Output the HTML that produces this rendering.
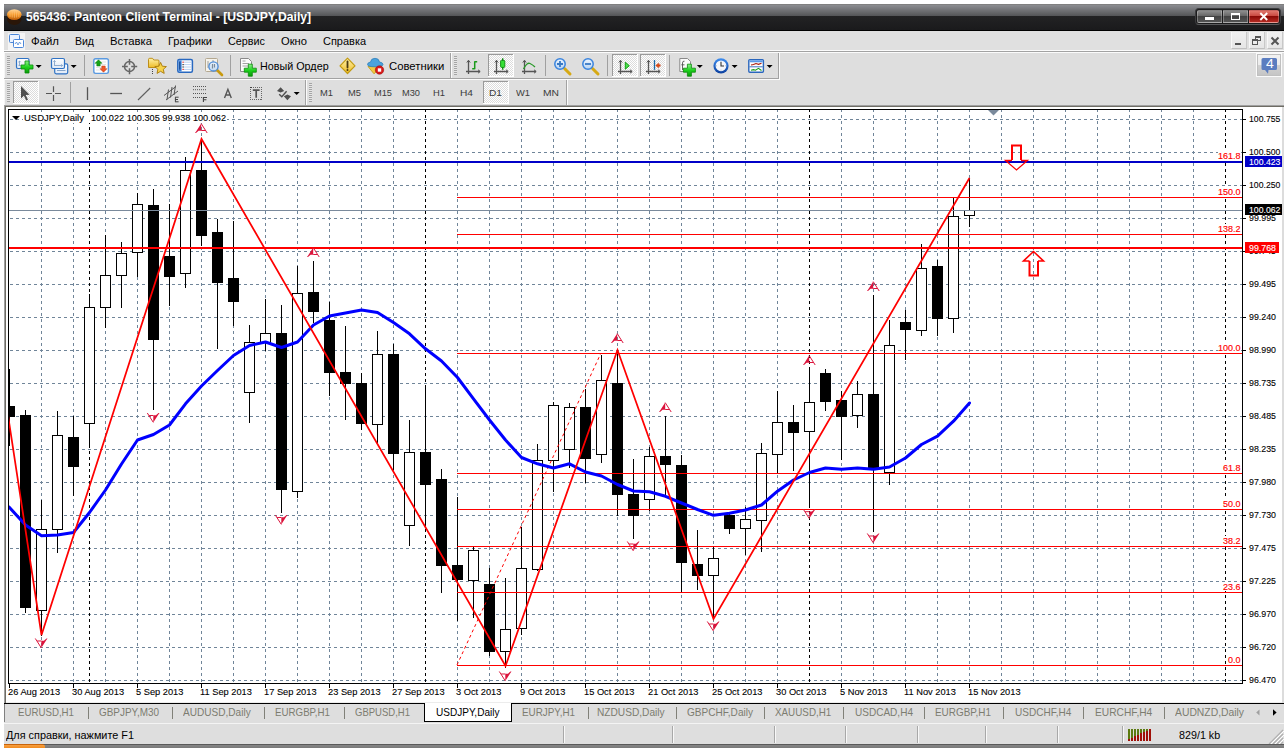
<!DOCTYPE html>
<html><head><meta charset="utf-8"><title>565436: Panteon Client Terminal - [USDJPY,Daily]</title>
<style>html,body{margin:0;padding:0}body{width:1288px;height:748px;background:#fff;position:relative;overflow:hidden;font-family:"Liberation Sans",sans-serif}.abs{position:absolute}.t{position:absolute;white-space:nowrap;transform-origin:0 50%;font-family:"Liberation Sans",sans-serif}</style></head><body>
<div class="abs" style="left:4px;top:4px;width:1280px;height:27px;background:linear-gradient(#808080 0,#808080 1px,#8c8d91 1px,#545557 12px,#232324 12px,#1a1a1c 26px,#000 26px,#000 27px)"></div>
<span class="t" style="left:26.0px;top:8.7px;font-size:12px;line-height:16px;color:#fff;font-weight:bold;transform:scaleX(1.014);">565436: Panteon Client Terminal - [USDJPY,Daily]</span>
<svg class="abs" style="left:6px;top:8px" width="18" height="18" viewBox="0 0 18 18"><defs><linearGradient id="og" x1="0" y1="0" x2="0" y2="1"><stop offset="0" stop-color="#ffd9a0"/><stop offset="0.5" stop-color="#f79a2c"/><stop offset="1" stop-color="#b85a08"/></linearGradient></defs><ellipse cx="8.3" cy="11.3" rx="7.3" ry="5.6" fill="#2a1608"/><ellipse cx="8.3" cy="6.6" rx="7.3" ry="5.4" fill="url(#og)"/><path d="M4 4.5V9M6.2 3.5V9.5M8.4 3.2V9.8M10.6 3.5V9.5M12.8 4.5V9" stroke="#ffc880" stroke-width="0.8" opacity="0.7"/></svg>
<div class="abs" style="left:1195px;top:8px;width:86px;height:17px;border-radius:4px;background:#1b1b1c;border:1px solid #3c3c3e;border-bottom-color:#5a5a5c;box-sizing:border-box"></div>
<div class="abs" style="left:1197px;top:10px;width:25px;height:13px;box-sizing:border-box;border:1px solid rgba(255,255,255,0.28);border-radius:2px 0 0 2px;background:linear-gradient(#8c8c8c,#626262 50%,#424242 50%,#545454)"></div>
<div class="abs" style="left:1223px;top:10px;width:25px;height:13px;box-sizing:border-box;border:1px solid rgba(255,255,255,0.28);background:linear-gradient(#8c8c8c,#626262 50%,#424242 50%,#545454)"></div>
<div class="abs" style="left:1249px;top:10px;width:30px;height:13px;box-sizing:border-box;border:1px solid rgba(255,255,255,0.28);border-radius:0 2px 2px 0;background:linear-gradient(#e0766c,#c6443c 50%,#8a0a06 50%,#b42a22)"></div>
<div class="abs" style="left:1205px;top:17px;width:9px;height:3px;background:#fff"></div>
<div class="abs" style="left:1231px;top:13px;width:9px;height:7px;border:1px solid #fff;border-top-width:2px;box-sizing:border-box"></div>
<svg class="abs" style="left:1259px;top:12px" width="10" height="9"><path d="M1.3 1L8.2 8M8.2 1L1.3 8" stroke="#fff" stroke-width="1.9"/></svg>
<div class="abs" style="left:4px;top:31px;width:1280px;height:19px;background:#e0e0e0"></div>
<div class="abs" style="left:4px;top:50px;width:1280px;height:1px;background:#fbfbfb"></div>
<div class="abs" style="left:4px;top:51px;width:1280px;height:1px;background:#a2a2a2"></div>
<div class="abs" style="left:4px;top:52px;width:1280px;height:1px;background:#fbfbfb"></div>
<span class="t" style="left:31.0px;top:33.5px;font-size:11px;line-height:15px;color:#000;transform:scaleX(1.035);">Файл</span>
<span class="t" style="left:75.0px;top:33.5px;font-size:11px;line-height:15px;color:#000;transform:scaleX(0.955);">Вид</span>
<span class="t" style="left:110.0px;top:33.5px;font-size:11px;line-height:15px;color:#000;transform:scaleX(1.027);">Вставка</span>
<span class="t" style="left:168.0px;top:33.5px;font-size:11px;line-height:15px;color:#000;transform:scaleX(1.006);">Графики</span>
<span class="t" style="left:228.0px;top:33.5px;font-size:11px;line-height:15px;color:#000;transform:scaleX(0.982);">Сервис</span>
<span class="t" style="left:281.0px;top:33.5px;font-size:11px;line-height:15px;color:#000;transform:scaleX(1.017);">Окно</span>
<span class="t" style="left:323.0px;top:33.5px;font-size:11px;line-height:15px;color:#000;transform:scaleX(0.997);">Справка</span>
<svg class="abs" style="left:8px;top:33px" width="17" height="17" viewBox="0 0 17 17"><rect x="0" y="0" width="17" height="17" fill="#f4f4f4"/><rect x="1.5" y="1.5" width="10" height="8" rx="1" fill="#eaf2ff" stroke="#4a86d8"/><rect x="5.5" y="6.5" width="10" height="8" rx="1" fill="#fff" stroke="#4a86d8"/><path d="M7 11l1.5 -2l1.5 3l1.5 -3l1.5 2" stroke="#4a86d8" fill="none" stroke-width="0.8"/></svg>
<div class="abs" style="left:1231px;top:32px;width:16px;height:17px;background:linear-gradient(#f0f0f0,#e6e6e6);border-right:1px solid #c8c8c8;border-bottom:1px solid #c0c0c0;border-left:1px solid #f8f8f8;box-sizing:border-box"></div>
<div class="abs" style="left:1249px;top:32px;width:16px;height:17px;background:linear-gradient(#f0f0f0,#e6e6e6);border-right:1px solid #c8c8c8;border-bottom:1px solid #c0c0c0;border-left:1px solid #f8f8f8;box-sizing:border-box"></div>
<div class="abs" style="left:1267px;top:32px;width:16px;height:17px;background:linear-gradient(#f0f0f0,#e6e6e6);border-right:1px solid #c8c8c8;border-bottom:1px solid #c0c0c0;border-left:1px solid #f8f8f8;box-sizing:border-box"></div>
<div class="abs" style="left:1235px;top:43px;width:6px;height:2px;background:#555"></div>
<div class="abs" style="left:1255px;top:36px;width:6px;height:5px;border:1px solid #555;border-top-width:2px;box-sizing:border-box"></div>
<div class="abs" style="left:1252px;top:39px;width:6px;height:6px;border:1px solid #555;border-top-width:2px;box-sizing:border-box;background:#ececec"></div>
<svg class="abs" style="left:1270px;top:36px" width="10" height="10"><path d="M1.5 1.5L8.5 8.5M8.5 1.5L1.5 8.5" stroke="#555" stroke-width="2"/></svg>
<div class="abs" style="left:4px;top:53px;width:1280px;height:52px;background:#dedede"></div>
<div class="abs" style="left:4px;top:53px;width:1px;height:52px;background:#f6f6f6"></div>
<div class="abs" style="left:4px;top:78px;width:776px;height:1px;background:#a2a2a2"></div>
<div class="abs" style="left:4px;top:79px;width:776px;height:1px;background:#fbfbfb"></div>
<div class="abs" style="left:450px;top:53px;width:1px;height:25px;background:#a2a2a2"></div>
<div class="abs" style="left:451px;top:53px;width:1px;height:25px;background:#fbfbfb"></div>
<div class="abs" style="left:778px;top:53px;width:1px;height:26px;background:#a2a2a2"></div>
<div class="abs" style="left:779px;top:53px;width:1px;height:27px;background:#fbfbfb"></div>
<div class="abs" style="left:305px;top:80px;width:1px;height:25px;background:#a2a2a2"></div>
<div class="abs" style="left:306px;top:80px;width:1px;height:25px;background:#fbfbfb"></div>
<div class="abs" style="left:566px;top:80px;width:1px;height:25px;background:#a2a2a2"></div>
<div class="abs" style="left:567px;top:80px;width:1px;height:25px;background:#fbfbfb"></div>
<div class="abs" style="left:7px;top:56px;width:3px;height:19px;background:repeating-linear-gradient(#a4a4a4 0,#a4a4a4 1px,#e6e6e6 1px,#e6e6e6 2px)"></div>
<div class="abs" style="left:454px;top:56px;width:3px;height:19px;background:repeating-linear-gradient(#a4a4a4 0,#a4a4a4 1px,#e6e6e6 1px,#e6e6e6 2px)"></div>
<div class="abs" style="left:7px;top:83px;width:3px;height:19px;background:repeating-linear-gradient(#a4a4a4 0,#a4a4a4 1px,#e6e6e6 1px,#e6e6e6 2px)"></div>
<div class="abs" style="left:309px;top:83px;width:3px;height:19px;background:repeating-linear-gradient(#a4a4a4 0,#a4a4a4 1px,#e6e6e6 1px,#e6e6e6 2px)"></div>
<div class="abs" style="left:84px;top:55px;width:1px;height:21px;background:#a0a0a0"></div>
<div class="abs" style="left:230px;top:55px;width:1px;height:21px;background:#a0a0a0"></div>
<div class="abs" style="left:545px;top:55px;width:1px;height:21px;background:#a0a0a0"></div>
<div class="abs" style="left:607px;top:55px;width:1px;height:21px;background:#a0a0a0"></div>
<div class="abs" style="left:669px;top:55px;width:1px;height:21px;background:#a0a0a0"></div>
<div class="abs" style="left:70px;top:82px;width:1px;height:21px;background:#a0a0a0"></div>
<svg class="abs" style="left:0;top:0" width="1288" height="108" viewBox="0 0 1288 108">
<defs>
<linearGradient id="gPlus" x1="0" y1="0" x2="0" y2="1"><stop offset="0" stop-color="#8cf28c"/><stop offset="0.5" stop-color="#1fd21f"/><stop offset="1" stop-color="#0a9a0a"/></linearGradient>
<linearGradient id="gWin" x1="0" y1="0" x2="0" y2="1"><stop offset="0" stop-color="#ffffff"/><stop offset="1" stop-color="#dfe9f6"/></linearGradient>
<linearGradient id="gYel" x1="0" y1="0" x2="0" y2="1"><stop offset="0" stop-color="#fff2a8"/><stop offset="1" stop-color="#eebc28"/></linearGradient>
<linearGradient id="gLens" x1="0" y1="0" x2="0" y2="1"><stop offset="0" stop-color="#eef6ff"/><stop offset="1" stop-color="#b8d4f2"/></linearGradient>
<linearGradient id="gClock" x1="0" y1="0" x2="0" y2="1"><stop offset="0" stop-color="#3f8ef0"/><stop offset="1" stop-color="#0b3f9e"/></linearGradient>
<pattern id="chk" width="2" height="2" patternUnits="userSpaceOnUse"><rect width="2" height="2" fill="#ffffff"/><rect width="1" height="1" fill="#dcdcdc"/><rect x="1" y="1" width="1" height="1" fill="#dcdcdc"/></pattern>
<g id="plus"><path d="M4 0H8V4H12V8H8V12H4V8H0V4H4Z" fill="url(#gPlus)" stroke="#078a07" stroke-width="0.8"/></g>
<g id="dd"><path d="M0 0H6L3 3Z" fill="#000"/></g>
<g id="axes" fill="none" stroke="#555" stroke-width="1.3"><path d="M2.5 0.5V14M0 11.5H14"/><path d="M0.8 2.5L2.5 0.3L4.2 2.5M12 9.8L14.2 11.5L12 13.2" stroke-width="1"/></g>
</defs>

<!-- pressed buttons (checker) -->
<g shape-rendering="crispEdges">
<rect x="13" y="81" width="26" height="23" fill="url(#chk)"/><path d="M13.5 103V81.5H38" stroke="#9a9a9a" fill="none"/><path d="M13 103.5H38.5V81" stroke="#fff" fill="none"/>
<rect x="483" y="81" width="26" height="23" fill="url(#chk)"/><path d="M483.5 103V81.5H508" stroke="#9a9a9a" fill="none"/><path d="M483 103.5H508.5V81" stroke="#fff" fill="none"/>
<rect x="488" y="54" width="26" height="23" fill="url(#chk)"/><path d="M488.5 76V54.5H513" stroke="#9a9a9a" fill="none"/><path d="M488 76.5H513.5V54" stroke="#fff" fill="none"/>
<rect x="612" y="54" width="26" height="23" fill="url(#chk)"/><path d="M612.5 76V54.5H637" stroke="#9a9a9a" fill="none"/><path d="M612 76.5H637.5V54" stroke="#fff" fill="none"/>
<rect x="640" y="54" width="26" height="23" fill="url(#chk)"/><path d="M640.5 76V54.5H665" stroke="#9a9a9a" fill="none"/><path d="M640 76.5H665.5V54" stroke="#fff" fill="none"/>
</g>

<!-- new chart -->
<rect x="16.5" y="58.5" width="12.5" height="10" rx="1.5" fill="url(#gWin)" stroke="#2f72c4" stroke-width="1.2"/>
<path d="M19.5 61V66M18.3 62.2L19.5 61L20.7 62.2M18.3 64.8L19.5 66L20.7 64.8" stroke="#7a9cc4" fill="none" stroke-width="0.8"/>
<use href="#plus" x="21" y="61"/>
<use href="#dd" x="35.7" y="65"/>
<!-- profiles -->
<rect x="54.7" y="63.8" width="13" height="10" rx="1.5" fill="url(#gWin)" stroke="#2f72c4" stroke-width="1.2"/>
<path d="M57 70.5H65.5" stroke="#7a9cc4" stroke-width="0.9"/>
<rect x="51.5" y="58.5" width="13" height="10" rx="1.5" fill="url(#gWin)" stroke="#2f72c4" stroke-width="1.2"/>
<path d="M54.5 60.5V65M53.3 61.7L54.5 60.5L55.7 61.7M54 65.5H62.5M61.3 64.3L62.5 65.5L61.3 66.7" stroke="#7a9cc4" fill="none" stroke-width="0.8"/>
<use href="#dd" x="70.7" y="65"/>
<!-- market watch -->
<rect x="93.8" y="58.8" width="14.6" height="14.6" rx="1.8" fill="#fdfdfd" stroke="#5b9ae0" stroke-width="1.4"/>
<path d="M96 67.5H106M96 70H106M101 62H106M101 64.5H106" stroke="#d8d8d8" stroke-width="0.7"/>
<path d="M98.5 59.8L102 63.3H100.2V66H96.8V63.3H95Z" fill="#17a317" stroke="#0c7a0c" stroke-width="0.5"/>
<path d="M103.5 72.2L100 68.7H101.8V66H105.2V68.7H107Z" fill="#f0582a" stroke="#c03a10" stroke-width="0.5"/>
<!-- crosshair circle -->
<g fill="none" stroke="#666" stroke-width="1.5"><circle cx="129.5" cy="66.5" r="5"/><path d="M129.5 59V64.8M129.5 68.2V74.2M122 66.5H127.8M131.2 66.5H137.2"/></g>
<!-- folder + star -->
<path d="M148.5 59.5Q148.5 58.3 149.7 58.3H152.5L153.8 60H158Q159 60 159 61V67.5H148.5Z" fill="url(#gYel)" stroke="#b8860b" stroke-width="0.9"/>
<path d="M152.5 69V70M152.5 71V72M152.5 73V74" stroke="#444" stroke-width="1"/>
<path d="M160.6 62.4L162.3 66.2L166.4 66.6L163.3 69.3L164.2 73.4L160.6 71.3L157 73.4L157.9 69.3L154.8 66.6L158.9 66.2Z" fill="#f7d34a" stroke="#a8780a" stroke-width="0.9" stroke-linejoin="round"/>
<!-- navigator -->
<rect x="177.8" y="59.6" width="14.6" height="12.6" rx="1.5" fill="#fff" stroke="#2868c0" stroke-width="1.5"/>
<rect x="178.6" y="60.4" width="3" height="11" fill="#3b7fd8"/>
<path d="M179.8 62V69.5" stroke="#123a78" stroke-width="0.9"/>
<path d="M184 62.2H191.5M184 64.6H191.5M184 67H191.5M184 69.4H191.5" stroke="#a8c4ee" stroke-width="0.8"/>
<rect x="182.5" y="61.6" width="1.2" height="1.2" fill="#e01010"/><rect x="182.5" y="64" width="1.2" height="1.2" fill="#222"/><rect x="182.5" y="66.4" width="1.2" height="1.2" fill="#222"/><rect x="182.5" y="68.8" width="1.2" height="1.2" fill="#e01010"/>
<!-- strategy tester -->
<rect x="205.5" y="58.5" width="12" height="13" rx="1" fill="#f6f3ec" stroke="#b4a890" stroke-width="1"/>
<path d="M208 61V68M210 63V66M213 60V66" stroke="#888" stroke-width="0.8"/>
<path d="M217 70L222 75" stroke="#c89a10" stroke-width="2.6" stroke-linecap="round"/>
<circle cx="213.5" cy="66.4" r="4.6" fill="url(#gLens)" fill-opacity="0.85" stroke="#4a8ad8" stroke-width="1.3"/>
<path d="M212.5 64V68.5M214.5 64V67.5" stroke="#7a8a9a" stroke-width="1.2"/>
<!-- new order -->
<path d="M240.5 58.5H248.5L251.5 61.5V71.5H240.5Z" fill="#fbfbfb" stroke="#8a8a8a" stroke-width="1"/>
<path d="M242.5 61H245.5M242.5 63.5H249M242.5 66H249" stroke="#9a9a9a" stroke-width="0.9"/>
<use href="#plus" x="244.3" y="64.2" transform="translate(0 0)"/>
<!-- diamond warning -->
<path d="M347.5 58.2L355 65.8L347.5 73.5L340 65.8Z" fill="url(#gYel)" stroke="#c29a12" stroke-width="1.2" stroke-linejoin="round"/>
<path d="M347.5 61.5V67.5" stroke="#4a3a10" stroke-width="1.8" stroke-linecap="round"/><circle cx="347.5" cy="70" r="1" fill="#4a3a10"/>
<!-- advisors -->
<path d="M368 66.5L374 73.8L381.5 66.5Z" fill="#f2c842" stroke="#c29a12" stroke-width="0.8"/>
<path d="M367.5 64.5Q367.5 62.5 370.5 62Q371 58.3 375 58.3Q379 58.3 379.5 62Q383 62.5 383 64.5Q383 66.8 375.2 66.8Q367.5 66.8 367.5 64.5Z" fill="#4aa2dc" stroke="#2a7ab8" stroke-width="0.7"/>
<circle cx="379.5" cy="70" r="4.2" fill="#d81818" stroke="#a00c0c" stroke-width="0.6"/><rect x="377.8" y="68.3" width="3.4" height="3.4" fill="#fff"/>
<!-- bars chart icon -->
<use href="#axes" x="466" y="60"/>
<path d="M474.7 61.3V69.3M474.7 61.8H477.2M472.2 68.8H474.7" stroke="#1a9a1a" stroke-width="1.5" fill="none"/>
<!-- candle icon -->
<use href="#axes" x="494" y="60"/>
<path d="M502.7 58.2V69.8" stroke="#0f8a0f" stroke-width="1.4"/><rect x="500.6" y="60.4" width="4.2" height="7" rx="0.8" fill="#35e035" stroke="#0f8a0f" stroke-width="0.9"/>
<!-- line icon -->
<use href="#axes" x="522" y="60"/>
<path d="M523.5 69Q527 62 530 63.5T535 67" stroke="#2a9a2a" stroke-width="1.3" fill="none"/>
<!-- zoom in -->
<path d="M564.5 68.5L570 74" stroke="#d6a914" stroke-width="3" stroke-linecap="round"/>
<circle cx="560" cy="64" r="5.2" fill="url(#gLens)" stroke="#3a84de" stroke-width="1.5"/>
<path d="M557 64H563M560 61V67" stroke="#3a7ac4" stroke-width="1.8"/>
<!-- zoom out -->
<path d="M592.5 68.5L598 74" stroke="#d6a914" stroke-width="3" stroke-linecap="round"/>
<circle cx="588" cy="64" r="5.2" fill="url(#gLens)" stroke="#3a84de" stroke-width="1.5"/>
<path d="M585 64H591" stroke="#3a7ac4" stroke-width="1.8"/>
<!-- autoscroll -->
<use href="#axes" x="618" y="60"/>
<path d="M625.3 62.2L629.3 65.7L625.3 69.2Z" fill="#4be04b" stroke="#12a012" stroke-width="1"/>
<!-- chart shift -->
<use href="#axes" x="646" y="60"/>
<path d="M654.5 60V69.8" stroke="#1a6aa8" stroke-width="1.3"/>
<path d="M655.8 65.5L658.6 63.2V64.7H660.2V66.3H658.6V67.8Z" fill="#e04a10" stroke="#c03000" stroke-width="0.5"/>
<!-- indicators add -->
<path d="M679.8 58.5H687.5L690.5 61.5V71.5H679.8Z" fill="#fbfbfb" stroke="#8a8a8a" stroke-width="1"/>
<path d="M684.5 61.2Q682.5 60.8 682.5 63V70M681.3 64.8H684.5" stroke="#555" stroke-width="0.9" fill="none"/>
<use href="#plus" x="683.4" y="64.2"/>
<use href="#dd" x="696.8" y="65"/>
<!-- clock -->
<circle cx="721" cy="65.8" r="7.6" fill="url(#gClock)"/>
<circle cx="721" cy="65.8" r="5.4" fill="#f4f6fa"/>
<path d="M721 62V66H724" stroke="#333" stroke-width="1.1" fill="none"/>
<path d="M721 61.2V61.8M721 69.8V70.4M716.4 65.8H717M725 65.8H725.6" stroke="#6a8ab8" stroke-width="0.8"/>
<use href="#dd" x="731.6" y="65"/>
<!-- templates -->
<rect x="748.8" y="59.6" width="14.6" height="12.6" rx="1" fill="#fff" stroke="#2a66bc" stroke-width="1.4"/>
<rect x="749.5" y="60.3" width="13.2" height="2" fill="#5b9ae8"/>
<path d="M749.5 66.8H762.7" stroke="#2a66bc" stroke-width="0.9"/>
<path d="M751 65L753.5 64.5L756 63.5L758.5 64.3L761.5 63.2" stroke="#a81808" stroke-width="1.1" fill="none"/>
<path d="M751 70.3L753.5 69.6L755.5 70.2L758.5 68.4L761.5 70.5" stroke="#189a18" stroke-width="1.1" fill="none"/>
<use href="#dd" x="766.6" y="65"/>

<!-- toolbar 2 icons -->
<path d="M21 86V98.4L23.9 95.7L26.2 100.6L28 99.8L25.7 95L29.6 94.7Z" fill="#505050"/>
<g stroke="#555" stroke-width="1.2" fill="none"><path d="M53.5 86.3V92M53.5 95V101M46 93.5H52M55 93.5H61"/></g>
<path d="M87.5 87.2V100" stroke="#555" stroke-width="1.3"/>
<path d="M110.2 93.5H122" stroke="#555" stroke-width="1.3"/>
<path d="M138 100L150.2 88" stroke="#606060" stroke-width="1.1"/>
<!-- channel E -->
<g stroke="#555" stroke-width="1" fill="none"><path d="M164 95.5L176 86.5M166 100L178 91M168.5 89.5L167 99.5M172 87L170.5 97.5M175.5 85.5L174 95"/></g>
<path d="M175 97.2H178.6M175 99.5H178M175 101.8H178.6M175.4 97.2V101.8" stroke="#444" stroke-width="1" fill="none"/>
<!-- fibo F -->
<g stroke="#555" stroke-width="1" stroke-dasharray="1 1"><path d="M193 86.5H206M193 89.7H206M193 93.5H206M193 97.5H202"/></g>
<path d="M203.4 102V97.5H207M203.4 99.8H206.4" stroke="#444" stroke-width="1.1" fill="none"/>
<!-- A -->
<path d="M224.5 98L227.9 89.3L231.3 98M225.8 95H230" stroke="#555" stroke-width="1.4" fill="none"/>
<!-- T box -->
<g shape-rendering="crispEdges"><rect x="250.5" y="87.5" width="11" height="12" fill="none" stroke="#666" stroke-width="1" stroke-dasharray="1 1"/></g>
<rect x="250" y="87" width="2" height="1" fill="#444"/>
<path d="M252.8 90.2H259.6M256.2 90V97.8" stroke="#555" stroke-width="1.7" fill="none"/>
<!-- arrows -->
<path d="M277 91L280.6 87.2L284.2 91L280.6 92.6Z M283.8 96.2L287.4 94.6L291 96.2L287.4 100.2Z" fill="#505050"/>
<path d="M279.2 94.2L281.8 96.8L286.6 91.2" stroke="#505050" stroke-width="1.4" fill="none"/>
<use href="#dd" x="293.7" y="92"/>
</svg>

<span class="t" style="left:260.4px;top:59.0px;font-size:11px;line-height:15px;color:#000;transform:scaleX(0.979);">Новый Ордер</span>
<span class="t" style="left:389.3px;top:59.0px;font-size:11px;line-height:15px;color:#000;transform:scaleX(1.027);">Советники</span>
<span class="t" style="left:320.0px;top:87.3px;font-size:9px;line-height:13px;color:#3c3c3c;transform:scaleX(1.040);-webkit-text-stroke:0.1px #3c3c3c;-webkit-text-stroke:0;">M1</span>
<span class="t" style="left:348.0px;top:87.3px;font-size:9px;line-height:13px;color:#3c3c3c;transform:scaleX(1.040);-webkit-text-stroke:0.1px #3c3c3c;-webkit-text-stroke:0;">M5</span>
<span class="t" style="left:374.0px;top:87.3px;font-size:9px;line-height:13px;color:#3c3c3c;transform:scaleX(1.028);-webkit-text-stroke:0.1px #3c3c3c;-webkit-text-stroke:0;">M15</span>
<span class="t" style="left:402.0px;top:87.3px;font-size:9px;line-height:13px;color:#3c3c3c;transform:scaleX(1.028);-webkit-text-stroke:0.1px #3c3c3c;-webkit-text-stroke:0;">M30</span>
<span class="t" style="left:433.0px;top:87.3px;font-size:9px;line-height:13px;color:#3c3c3c;transform:scaleX(1.043);-webkit-text-stroke:0.1px #3c3c3c;-webkit-text-stroke:0;">H1</span>
<span class="t" style="left:460.0px;top:87.3px;font-size:9px;line-height:13px;color:#3c3c3c;transform:scaleX(1.130);-webkit-text-stroke:0.1px #3c3c3c;-webkit-text-stroke:0;">H4</span>
<span class="t" style="left:489.0px;top:87.3px;font-size:9px;line-height:13px;color:#3c3c3c;transform:scaleX(1.130);-webkit-text-stroke:0.1px #3c3c3c;-webkit-text-stroke:0;">D1</span>
<span class="t" style="left:516.0px;top:87.3px;font-size:9px;line-height:13px;color:#3c3c3c;transform:scaleX(1.037);-webkit-text-stroke:0.1px #3c3c3c;-webkit-text-stroke:0;">W1</span>
<span class="t" style="left:543.0px;top:87.3px;font-size:9px;line-height:13px;color:#3c3c3c;transform:scaleX(1.143);-webkit-text-stroke:0.1px #3c3c3c;-webkit-text-stroke:0;">MN</span>
<div class="abs" style="left:1256px;top:53px;width:26px;height:24px;background:linear-gradient(#f2f2f2 0,#ececec 48%,#d2d2d2 48%,#c4c4c4 100%);border:1px solid #fafafa;box-shadow:inset 0 0 0 1px #c0c0c0;box-sizing:border-box"></div>
<svg class="abs" style="left:1261px;top:58px" width="17" height="17"><path d="M2 0H14.5a1.5 1.5 0 0 1 1.5 1.5V10.5a1.5 1.5 0 0 1 -1.5 1.5H7.5L7 15.8L4 12H2a1.5 1.5 0 0 1 -1.5 -1.5V1.5a1.5 1.5 0 0 1 1.5 -1.5Z" fill="#5b7dc0"/></svg>
<span class="t" style="left:1265.6px;top:56.3px;font-size:12px;line-height:16px;color:#fff;transform:scaleX(1.169);">4</span>
<div class="abs" style="left:4px;top:105px;width:1280px;height:1px;background:#a0a0a0"></div>
<div class="abs" style="left:5px;top:106px;width:1279px;height:1px;background:#6e6c64"></div>
<div class="abs" style="left:4px;top:105px;width:1px;height:598px;background:#a0a0a0"></div>
<div class="abs" style="left:5px;top:106px;width:1px;height:597px;background:#6e6c64"></div>
<div class="abs" style="left:1282px;top:107px;width:2px;height:596px;background:#dcdcdc"></div>
<div class="abs" style="left:4px;top:703px;width:1280px;height:20px;background:#dedede"></div>
<div class="abs" style="left:6px;top:702px;width:1276px;height:1px;background:#ececec"></div>
<div class="abs" style="left:4px;top:703px;width:1280px;height:1px;background:#000"></div>
<div class="abs" style="left:4px;top:704px;width:1px;height:18px;background:#808080"></div>
<span class="t" style="left:18.0px;top:705.0px;font-size:11px;line-height:15px;color:#7c7c70;transform:scaleX(0.881);">EURUSD,H1</span>
<span class="t" style="left:99.0px;top:705.0px;font-size:11px;line-height:15px;color:#7c7c70;transform:scaleX(0.903);">GBPJPY,M30</span>
<span class="t" style="left:183.0px;top:705.0px;font-size:11px;line-height:15px;color:#7c7c70;transform:scaleX(0.915);">AUDUSD,Daily</span>
<span class="t" style="left:275.0px;top:705.0px;font-size:11px;line-height:15px;color:#7c7c70;transform:scaleX(0.885);">EURGBP,H1</span>
<span class="t" style="left:355.0px;top:705.0px;font-size:11px;line-height:15px;color:#7c7c70;transform:scaleX(0.865);">GBPUSD,H1</span>
<span class="t" style="left:522.0px;top:705.0px;font-size:11px;line-height:15px;color:#7c7c70;transform:scaleX(0.897);">EURJPY,H1</span>
<span class="t" style="left:597.0px;top:705.0px;font-size:11px;line-height:15px;color:#7c7c70;transform:scaleX(0.923);">NZDUSD,Daily</span>
<span class="t" style="left:686.7px;top:705.0px;font-size:11px;line-height:15px;color:#7c7c70;transform:scaleX(0.915);">GBPCHF,Daily</span>
<span class="t" style="left:774.7px;top:705.0px;font-size:11px;line-height:15px;color:#7c7c70;transform:scaleX(0.894);">XAUUSD,H1</span>
<span class="t" style="left:854.7px;top:705.0px;font-size:11px;line-height:15px;color:#7c7c70;transform:scaleX(0.912);">USDCAD,H4</span>
<span class="t" style="left:935.0px;top:705.0px;font-size:11px;line-height:15px;color:#7c7c70;transform:scaleX(0.901);">EURGBP,H1</span>
<span class="t" style="left:1014.7px;top:705.0px;font-size:11px;line-height:15px;color:#7c7c70;transform:scaleX(0.912);">USDCHF,H4</span>
<span class="t" style="left:1094.7px;top:705.0px;font-size:11px;line-height:15px;color:#7c7c70;transform:scaleX(0.928);">EURCHF,H4</span>
<span class="t" style="left:1175.0px;top:705.0px;font-size:11px;line-height:15px;color:#7c7c70;transform:scaleX(0.941);">AUDNZD,Daily</span>
<div class="abs" style="left:88px;top:707px;width:1px;height:12px;background:#808078"></div>
<div class="abs" style="left:172px;top:707px;width:1px;height:12px;background:#808078"></div>
<div class="abs" style="left:264px;top:707px;width:1px;height:12px;background:#808078"></div>
<div class="abs" style="left:344px;top:707px;width:1px;height:12px;background:#808078"></div>
<div class="abs" style="left:588px;top:707px;width:1px;height:12px;background:#808078"></div>
<div class="abs" style="left:676px;top:707px;width:1px;height:12px;background:#808078"></div>
<div class="abs" style="left:764px;top:707px;width:1px;height:12px;background:#808078"></div>
<div class="abs" style="left:843px;top:707px;width:1px;height:12px;background:#808078"></div>
<div class="abs" style="left:924px;top:707px;width:1px;height:12px;background:#808078"></div>
<div class="abs" style="left:1003px;top:707px;width:1px;height:12px;background:#808078"></div>
<div class="abs" style="left:1083px;top:707px;width:1px;height:12px;background:#808078"></div>
<div class="abs" style="left:1164px;top:707px;width:1px;height:12px;background:#808078"></div>
<div class="abs" style="left:424px;top:703px;width:88px;height:19px;background:#fff;border:1px solid #000;border-top:none;box-sizing:border-box"></div>
<span class="t" style="left:435.5px;top:705.0px;font-size:11px;line-height:15px;color:#000;transform:scaleX(0.914);">USDJPY,Daily</span>
<svg class="abs" style="left:1254px;top:707px" width="26" height="11"><path d="M5.5 2.5V8.5L2.2 5.5Z" fill="#a0a0a0"/><path d="M19 2.3V8.7L22.6 5.5Z" fill="#000"/></svg>
<div class="abs" style="left:4px;top:723px;width:1280px;height:21px;background:#dedede"></div>
<div class="abs" style="left:4px;top:723px;width:1280px;height:1px;background:#f4f4f4"></div>
<span class="t" style="left:6.0px;top:727.5px;font-size:11px;line-height:15px;color:#000;transform:scaleX(0.987);">Для справки, нажмите F1</span>
<div class="abs" style="left:563px;top:726px;width:1px;height:17px;background:#a8a8a8"></div><div class="abs" style="left:564px;top:726px;width:1px;height:17px;background:#f8f8f8"></div>
<div class="abs" style="left:672px;top:726px;width:1px;height:17px;background:#a8a8a8"></div><div class="abs" style="left:673px;top:726px;width:1px;height:17px;background:#f8f8f8"></div>
<div class="abs" style="left:774px;top:726px;width:1px;height:17px;background:#a8a8a8"></div><div class="abs" style="left:775px;top:726px;width:1px;height:17px;background:#f8f8f8"></div>
<div class="abs" style="left:845px;top:726px;width:1px;height:17px;background:#a8a8a8"></div><div class="abs" style="left:846px;top:726px;width:1px;height:17px;background:#f8f8f8"></div>
<div class="abs" style="left:917px;top:726px;width:1px;height:17px;background:#a8a8a8"></div><div class="abs" style="left:918px;top:726px;width:1px;height:17px;background:#f8f8f8"></div>
<div class="abs" style="left:985px;top:726px;width:1px;height:17px;background:#a8a8a8"></div><div class="abs" style="left:986px;top:726px;width:1px;height:17px;background:#f8f8f8"></div>
<div class="abs" style="left:1057px;top:726px;width:1px;height:17px;background:#a8a8a8"></div><div class="abs" style="left:1058px;top:726px;width:1px;height:17px;background:#f8f8f8"></div>
<div class="abs" style="left:1122px;top:726px;width:1px;height:17px;background:#a8a8a8"></div><div class="abs" style="left:1123px;top:726px;width:1px;height:17px;background:#f8f8f8"></div>
<svg class="abs" style="left:0;top:0" width="1288" height="748" shape-rendering="crispEdges"><rect x="1128" y="729" width="2" height="12" fill="#5c7a10"/><rect x="1128" y="739.0" width="2" height="2.0" fill="#a01008"/><rect x="1131" y="729" width="2" height="12" fill="#5c7a10"/><rect x="1131" y="737.6" width="2" height="3.4" fill="#a01008"/><rect x="1134" y="729" width="2" height="12" fill="#5c7a10"/><rect x="1134" y="736.2" width="2" height="4.8" fill="#a01008"/><rect x="1137" y="729" width="2" height="12" fill="#5c7a10"/><rect x="1137" y="734.8" width="2" height="6.2" fill="#a01008"/><rect x="1140" y="729" width="2" height="12" fill="#5c7a10"/><rect x="1140" y="733.4" width="2" height="7.6" fill="#a01008"/><rect x="1143" y="729" width="2" height="12" fill="#5c7a10"/><rect x="1143" y="732.0" width="2" height="9.0" fill="#a01008"/><rect x="1146" y="729" width="2" height="12" fill="#5c7a10"/><rect x="1146" y="730.6" width="2" height="10.4" fill="#a01008"/><rect x="1149" y="729" width="2" height="12" fill="#5c7a10"/><rect x="1149" y="729.2" width="2" height="11.8" fill="#a01008"/></svg>
<span class="t" style="left:1178.6px;top:727.5px;font-size:11px;line-height:15px;color:#000;transform:scaleX(0.976);">829/1 kb</span>
<svg class="abs" style="left:1268px;top:729px" width="16" height="16"><path d="M15 1L1 15M15 5L5 15M15 9L9 15M15 13L13 15" stroke="#b0b0b0" stroke-width="1.2"/><path d="M16 2L2 16M16 6L6 16M16 10L10 16" stroke="#fff" stroke-width="1"/></svg>
<div class="abs" style="left:4px;top:744px;width:1280px;height:4px;background:linear-gradient(#5a5a5a 0,#5a5a5a 1px,#868686 1px,#7a7a7a 4px)"></div>
<div class="abs" style="left:4px;top:744px;width:41px;height:4px;background:linear-gradient(#c8640c 0,#c8640c 1px,#f8a040 1px,#f08a20 4px);border-radius:0 3px 0 0"></div>
<svg class="abs" style="left:0;top:0" width="1288" height="748" viewBox="0 0 1288 748">
<defs><clipPath id="cp"><rect x="9" y="110" width="1233" height="573"/></clipPath></defs>
<g shape-rendering="crispEdges">
<rect x="8" y="109" width="1235" height="1" fill="#000"/>
<rect x="8" y="109" width="1" height="575" fill="#000"/>
<rect x="1242" y="109" width="1" height="575" fill="#000"/>
<rect x="8" y="683" width="1235" height="1" fill="#000"/>
</g>
<g clip-path="url(#cp)">
<g shape-rendering="crispEdges" stroke="#708599" stroke-width="1" stroke-dasharray="3 3" fill="none">
<path d="M10 119.5H1242"/>
<path d="M10 152.5H1242"/>
<path d="M10 185.5H1242"/>
<path d="M10 218.5H1242"/>
<path d="M10 251.5H1242"/>
<path d="M10 284.5H1242"/>
<path d="M10 317.5H1242"/>
<path d="M10 350.5H1242"/>
<path d="M10 383.5H1242"/>
<path d="M10 416.5H1242"/>
<path d="M10 449.5H1242"/>
<path d="M10 482.5H1242"/>
<path d="M10 515.5H1242"/>
<path d="M10 548.5H1242"/>
<path d="M10 581.5H1242"/>
<path d="M10 614.5H1242"/>
<path d="M10 647.5H1242"/>
<path d="M10 680.5H1242"/>
<path d="M41.5 109V683"/>
<path d="M73.5 109V683"/>
<path d="M105.5 109V683"/>
<path d="M137.5 109V683"/>
<path d="M169.5 109V683"/>
<path d="M201.5 109V683"/>
<path d="M233.5 109V683"/>
<path d="M265.5 109V683"/>
<path d="M297.5 109V683"/>
<path d="M329.5 109V683"/>
<path d="M361.5 109V683"/>
<path d="M393.5 109V683"/>
<path d="M457.5 109V683"/>
<path d="M489.5 109V683"/>
<path d="M521.5 109V683"/>
<path d="M553.5 109V683"/>
<path d="M585.5 109V683"/>
<path d="M617.5 109V683"/>
<path d="M649.5 109V683"/>
<path d="M681.5 109V683"/>
<path d="M713.5 109V683"/>
<path d="M745.5 109V683"/>
<path d="M777.5 109V683"/>
<path d="M841.5 109V683"/>
<path d="M873.5 109V683"/>
<path d="M905.5 109V683"/>
<path d="M937.5 109V683"/>
<path d="M969.5 109V683"/>
<path d="M1001.5 109V683"/>
<path d="M1033.5 109V683"/>
<path d="M1065.5 109V683"/>
<path d="M1097.5 109V683"/>
<path d="M1129.5 109V683"/>
<path d="M1161.5 109V683"/>
<path d="M1193.5 109V683"/>
</g>
<g shape-rendering="crispEdges" stroke="#000" stroke-width="1" stroke-dasharray="3 3" fill="none">
<path d="M89.5 109V683"/>
<path d="M425.5 109V683"/>
<path d="M809.5 109V683"/>
<path d="M1225.5 109V683"/>
</g>
<g shape-rendering="crispEdges">
<rect x="9" y="369" width="1" height="77" fill="#000"/>
<rect x="4" y="406" width="11" height="11" fill="#000"/>
<rect x="25" y="410" width="1" height="203" fill="#000"/>
<rect x="20" y="415" width="11" height="193" fill="#000"/>
<rect x="41" y="500" width="1" height="136" fill="#000"/>
<rect x="36.5" y="529.5" width="10" height="81" fill="#fff" stroke="#000" stroke-width="1"/>
<rect x="57" y="411" width="1" height="142" fill="#000"/>
<rect x="52.5" y="435.5" width="10" height="94" fill="#fff" stroke="#000" stroke-width="1"/>
<rect x="73" y="416" width="1" height="80" fill="#000"/>
<rect x="68" y="437" width="11" height="30" fill="#000"/>
<rect x="89" y="294" width="1" height="154" fill="#000"/>
<rect x="84.5" y="307.5" width="10" height="116" fill="#fff" stroke="#000" stroke-width="1"/>
<rect x="105" y="235" width="1" height="93" fill="#000"/>
<rect x="100.5" y="275.5" width="10" height="32" fill="#fff" stroke="#000" stroke-width="1"/>
<rect x="121" y="242" width="1" height="66" fill="#000"/>
<rect x="116.5" y="253.5" width="10" height="22" fill="#fff" stroke="#000" stroke-width="1"/>
<rect x="137" y="193" width="1" height="84" fill="#000"/>
<rect x="132.5" y="204.5" width="10" height="48" fill="#fff" stroke="#000" stroke-width="1"/>
<rect x="153" y="189" width="1" height="221" fill="#000"/>
<rect x="148" y="205" width="11" height="135" fill="#000"/>
<rect x="169" y="204" width="1" height="102" fill="#000"/>
<rect x="164" y="256" width="11" height="21" fill="#000"/>
<rect x="185" y="157" width="1" height="131" fill="#000"/>
<rect x="180.5" y="170.5" width="10" height="103" fill="#fff" stroke="#000" stroke-width="1"/>
<rect x="201" y="139" width="1" height="107" fill="#000"/>
<rect x="196" y="170" width="11" height="66" fill="#000"/>
<rect x="217" y="219" width="1" height="130" fill="#000"/>
<rect x="212" y="232" width="11" height="51" fill="#000"/>
<rect x="233" y="221" width="1" height="105" fill="#000"/>
<rect x="228" y="278" width="11" height="24" fill="#000"/>
<rect x="249" y="325" width="1" height="98" fill="#000"/>
<rect x="244.5" y="342.5" width="10" height="50" fill="#fff" stroke="#000" stroke-width="1"/>
<rect x="265" y="299" width="1" height="52" fill="#000"/>
<rect x="260.5" y="333.5" width="10" height="9" fill="#fff" stroke="#000" stroke-width="1"/>
<rect x="281" y="305" width="1" height="208" fill="#000"/>
<rect x="276" y="333" width="11" height="157" fill="#000"/>
<rect x="297" y="266" width="1" height="232" fill="#000"/>
<rect x="292.5" y="293.5" width="10" height="198" fill="#fff" stroke="#000" stroke-width="1"/>
<rect x="313" y="261" width="1" height="62" fill="#000"/>
<rect x="308" y="292" width="11" height="20" fill="#000"/>
<rect x="329" y="302" width="1" height="94" fill="#000"/>
<rect x="324" y="320" width="11" height="53" fill="#000"/>
<rect x="345" y="326" width="1" height="94" fill="#000"/>
<rect x="340" y="372" width="11" height="12" fill="#000"/>
<rect x="361" y="373" width="1" height="57" fill="#000"/>
<rect x="356" y="383" width="11" height="41" fill="#000"/>
<rect x="377" y="331" width="1" height="114" fill="#000"/>
<rect x="372.5" y="354.5" width="10" height="70" fill="#fff" stroke="#000" stroke-width="1"/>
<rect x="393" y="344" width="1" height="126" fill="#000"/>
<rect x="388" y="354" width="11" height="100" fill="#000"/>
<rect x="409" y="420" width="1" height="126" fill="#000"/>
<rect x="404.5" y="452.5" width="10" height="73" fill="#fff" stroke="#000" stroke-width="1"/>
<rect x="425" y="385" width="1" height="141" fill="#000"/>
<rect x="420" y="452" width="11" height="33" fill="#000"/>
<rect x="441" y="469" width="1" height="124" fill="#000"/>
<rect x="436" y="479" width="11" height="87" fill="#000"/>
<rect x="457" y="497" width="1" height="124" fill="#000"/>
<rect x="452" y="565" width="11" height="15" fill="#000"/>
<rect x="473" y="547" width="1" height="71" fill="#000"/>
<rect x="468.5" y="550.5" width="10" height="30" fill="#fff" stroke="#000" stroke-width="1"/>
<rect x="489" y="568" width="1" height="88" fill="#000"/>
<rect x="484" y="584" width="11" height="68" fill="#000"/>
<rect x="505" y="578" width="1" height="90" fill="#000"/>
<rect x="500.5" y="629.5" width="10" height="22" fill="#fff" stroke="#000" stroke-width="1"/>
<rect x="521" y="527" width="1" height="108" fill="#000"/>
<rect x="516.5" y="568.5" width="10" height="60" fill="#fff" stroke="#000" stroke-width="1"/>
<rect x="537" y="444" width="1" height="127" fill="#000"/>
<rect x="532.5" y="460.5" width="10" height="109" fill="#fff" stroke="#000" stroke-width="1"/>
<rect x="553" y="402" width="1" height="90" fill="#000"/>
<rect x="548.5" y="405.5" width="10" height="55" fill="#fff" stroke="#000" stroke-width="1"/>
<rect x="569" y="403" width="1" height="65" fill="#000"/>
<rect x="564.5" y="407.5" width="10" height="42" fill="#fff" stroke="#000" stroke-width="1"/>
<rect x="585" y="389" width="1" height="94" fill="#000"/>
<rect x="580" y="407" width="11" height="52" fill="#000"/>
<rect x="601" y="355" width="1" height="108" fill="#000"/>
<rect x="596.5" y="380.5" width="10" height="74" fill="#fff" stroke="#000" stroke-width="1"/>
<rect x="617" y="350" width="1" height="166" fill="#000"/>
<rect x="612" y="383" width="11" height="112" fill="#000"/>
<rect x="633" y="459" width="1" height="80" fill="#000"/>
<rect x="628" y="494" width="11" height="22" fill="#000"/>
<rect x="649" y="447" width="1" height="64" fill="#000"/>
<rect x="644.5" y="456.5" width="10" height="43" fill="#fff" stroke="#000" stroke-width="1"/>
<rect x="665" y="416" width="1" height="81" fill="#000"/>
<rect x="660" y="456" width="11" height="9" fill="#000"/>
<rect x="681" y="455" width="1" height="137" fill="#000"/>
<rect x="676" y="465" width="11" height="98" fill="#000"/>
<rect x="697" y="530" width="1" height="60" fill="#000"/>
<rect x="692" y="564" width="11" height="12" fill="#000"/>
<rect x="713" y="547" width="1" height="72" fill="#000"/>
<rect x="708.5" y="558.5" width="10" height="17" fill="#fff" stroke="#000" stroke-width="1"/>
<rect x="729" y="514" width="1" height="20" fill="#000"/>
<rect x="724" y="515" width="11" height="14" fill="#000"/>
<rect x="745" y="507" width="1" height="48" fill="#000"/>
<rect x="740.5" y="519.5" width="10" height="9" fill="#fff" stroke="#000" stroke-width="1"/>
<rect x="761" y="443" width="1" height="109" fill="#000"/>
<rect x="756.5" y="453.5" width="10" height="67" fill="#fff" stroke="#000" stroke-width="1"/>
<rect x="777" y="391" width="1" height="83" fill="#000"/>
<rect x="772.5" y="422.5" width="10" height="32" fill="#fff" stroke="#000" stroke-width="1"/>
<rect x="793" y="405" width="1" height="66" fill="#000"/>
<rect x="788" y="422" width="11" height="11" fill="#000"/>
<rect x="809" y="367" width="1" height="141" fill="#000"/>
<rect x="804.5" y="402.5" width="10" height="29" fill="#fff" stroke="#000" stroke-width="1"/>
<rect x="825" y="369" width="1" height="42" fill="#000"/>
<rect x="820" y="373" width="11" height="29" fill="#000"/>
<rect x="841" y="391" width="1" height="69" fill="#000"/>
<rect x="836" y="400" width="11" height="17" fill="#000"/>
<rect x="857" y="381" width="1" height="47" fill="#000"/>
<rect x="852.5" y="394.5" width="10" height="21" fill="#fff" stroke="#000" stroke-width="1"/>
<rect x="873" y="295" width="1" height="237" fill="#000"/>
<rect x="868" y="394" width="11" height="75" fill="#000"/>
<rect x="889" y="320" width="1" height="165" fill="#000"/>
<rect x="884.5" y="345.5" width="10" height="127" fill="#fff" stroke="#000" stroke-width="1"/>
<rect x="905" y="310" width="1" height="50" fill="#000"/>
<rect x="900" y="322" width="11" height="8" fill="#000"/>
<rect x="921" y="244" width="1" height="92" fill="#000"/>
<rect x="916.5" y="268.5" width="10" height="62" fill="#fff" stroke="#000" stroke-width="1"/>
<rect x="937" y="260" width="1" height="76" fill="#000"/>
<rect x="932" y="266" width="11" height="53" fill="#000"/>
<rect x="953" y="198" width="1" height="135" fill="#000"/>
<rect x="948.5" y="216.5" width="10" height="102" fill="#fff" stroke="#000" stroke-width="1"/>
<rect x="969" y="178" width="1" height="49" fill="#000"/>
<rect x="964.5" y="210.5" width="10" height="5" fill="#fff" stroke="#000" stroke-width="1"/>
</g>
<g shape-rendering="crispEdges">
<rect x="9" y="210" width="1233" height="1" fill="#7a8a9c"/>
<rect x="457" y="665" width="785" height="1" fill="#f00"/>
<rect x="457" y="592" width="785" height="1" fill="#f00"/>
<rect x="457" y="546" width="785" height="1" fill="#f00"/>
<rect x="457" y="509" width="785" height="1" fill="#f00"/>
<rect x="457" y="473" width="785" height="1" fill="#f00"/>
<rect x="457" y="353" width="785" height="1" fill="#f00"/>
<rect x="457" y="234" width="785" height="1" fill="#f00"/>
<rect x="457" y="197" width="785" height="1" fill="#f00"/>
<rect x="457" y="161" width="785" height="1" fill="#f00"/>
<rect x="9" y="161" width="1233" height="2" fill="#0000c8"/>
<rect x="9" y="247" width="1233" height="2" fill="#f00"/>
</g>
<path d="M457 665L601 353" stroke="#f00" stroke-width="1" stroke-dasharray="3 3" fill="none"/>
<polyline points="-6.5,495.0 9.5,507.5 25.5,525.0 41.5,535.8 57.5,535.0 73.5,532.5 89.5,512.5 105.5,490.0 121.5,464.0 137.5,440.0 153.5,434.5 169.5,425.0 185.5,403.8 201.5,386.0 217.5,370.5 233.5,355.5 249.5,345.5 265.5,342.0 281.5,347.5 297.5,342.0 313.5,325.0 329.5,316.0 345.5,313.0 361.5,310.0 377.5,312.5 393.5,322.5 409.5,333.8 425.5,348.8 441.5,361.0 457.5,377.5 473.5,398.8 489.5,420.0 505.5,440.0 521.5,457.5 537.5,463.8 553.5,468.0 569.5,463.8 585.5,472.0 601.5,476.0 617.5,484.5 633.5,491.0 649.5,491.8 665.5,496.3 681.5,503.0 697.5,509.5 713.5,515.3 729.5,513.3 745.5,510.0 761.5,505.0 777.5,491.2 793.5,480.0 809.5,472.5 825.5,468.0 841.5,469.2 857.5,468.0 873.5,469.2 889.5,467.0 905.5,458.0 921.5,444.5 937.5,436.2 953.5,421.2 969.5,403.0" fill="none" stroke="#0000ff" stroke-width="3" stroke-linejoin="round" stroke-linecap="round"/>
<polyline points="-6.5,320.0 41.5,635.0 201.5,139.0 505.5,666.0 617.5,350.0 713.5,619.0 969.5,178.0" fill="none" stroke="#f00" stroke-width="1.75" stroke-linejoin="miter"/>
<g transform="translate(201.2 128.2)"><path d="M0 -4.6L-4.6 2.6L-6.2 4.8L-5.2 4.8L-2.6 2.6L0 2.6Z" fill="#dc143c"/><path d="M0 -4.6L6 4.8M0 2.3H4.2" fill="none" stroke="#dc143c" stroke-width="1"/></g>
<g transform="translate(313.2 252.2)"><path d="M0 -4.6L-4.6 2.6L-6.2 4.8L-5.2 4.8L-2.6 2.6L0 2.6Z" fill="#dc143c"/><path d="M0 -4.6L6 4.8M0 2.3H4.2" fill="none" stroke="#dc143c" stroke-width="1"/></g>
<g transform="translate(617.2 338.2)"><path d="M0 -4.6L-4.6 2.6L-6.2 4.8L-5.2 4.8L-2.6 2.6L0 2.6Z" fill="#dc143c"/><path d="M0 -4.6L6 4.8M0 2.3H4.2" fill="none" stroke="#dc143c" stroke-width="1"/></g>
<g transform="translate(665.2 407.2)"><path d="M0 -4.6L-4.6 2.6L-6.2 4.8L-5.2 4.8L-2.6 2.6L0 2.6Z" fill="#dc143c"/><path d="M0 -4.6L6 4.8M0 2.3H4.2" fill="none" stroke="#dc143c" stroke-width="1"/></g>
<g transform="translate(809.2 360.2)"><path d="M0 -4.6L-4.6 2.6L-6.2 4.8L-5.2 4.8L-2.6 2.6L0 2.6Z" fill="#dc143c"/><path d="M0 -4.6L6 4.8M0 2.3H4.2" fill="none" stroke="#dc143c" stroke-width="1"/></g>
<g transform="translate(873.2 286.2)"><path d="M0 -4.6L-4.6 2.6L-6.2 4.8L-5.2 4.8L-2.6 2.6L0 2.6Z" fill="#dc143c"/><path d="M0 -4.6L6 4.8M0 2.3H4.2" fill="none" stroke="#dc143c" stroke-width="1"/></g>
<g transform="translate(41.3 643.3) rotate(180)"><path d="M0 -4.6L-4.6 2.6L-6.2 4.8L-5.2 4.8L-2.6 2.6L0 2.6Z" fill="#dc143c"/><path d="M0 -4.6L6 4.8M0 2.3H4.2" fill="none" stroke="#dc143c" stroke-width="1"/></g>
<g transform="translate(153.3 417.8) rotate(180)"><path d="M0 -4.6L-4.6 2.6L-6.2 4.8L-5.2 4.8L-2.6 2.6L0 2.6Z" fill="#dc143c"/><path d="M0 -4.6L6 4.8M0 2.3H4.2" fill="none" stroke="#dc143c" stroke-width="1"/></g>
<g transform="translate(281.3 519.8) rotate(180)"><path d="M0 -4.6L-4.6 2.6L-6.2 4.8L-5.2 4.8L-2.6 2.6L0 2.6Z" fill="#dc143c"/><path d="M0 -4.6L6 4.8M0 2.3H4.2" fill="none" stroke="#dc143c" stroke-width="1"/></g>
<g transform="translate(505.3 676.3) rotate(180)"><path d="M0 -4.6L-4.6 2.6L-6.2 4.8L-5.2 4.8L-2.6 2.6L0 2.6Z" fill="#dc143c"/><path d="M0 -4.6L6 4.8M0 2.3H4.2" fill="none" stroke="#dc143c" stroke-width="1"/></g>
<g transform="translate(633.3 546.3) rotate(180)"><path d="M0 -4.6L-4.6 2.6L-6.2 4.8L-5.2 4.8L-2.6 2.6L0 2.6Z" fill="#dc143c"/><path d="M0 -4.6L6 4.8M0 2.3H4.2" fill="none" stroke="#dc143c" stroke-width="1"/></g>
<g transform="translate(713.3 626.3) rotate(180)"><path d="M0 -4.6L-4.6 2.6L-6.2 4.8L-5.2 4.8L-2.6 2.6L0 2.6Z" fill="#dc143c"/><path d="M0 -4.6L6 4.8M0 2.3H4.2" fill="none" stroke="#dc143c" stroke-width="1"/></g>
<g transform="translate(809.3 514.0) rotate(180)"><path d="M0 -4.6L-4.6 2.6L-6.2 4.8L-5.2 4.8L-2.6 2.6L0 2.6Z" fill="#dc143c"/><path d="M0 -4.6L6 4.8M0 2.3H4.2" fill="none" stroke="#dc143c" stroke-width="1"/></g>
<g transform="translate(873.3 538.3) rotate(180)"><path d="M0 -4.6L-4.6 2.6L-6.2 4.8L-5.2 4.8L-2.6 2.6L0 2.6Z" fill="#dc143c"/><path d="M0 -4.6L6 4.8M0 2.3H4.2" fill="none" stroke="#dc143c" stroke-width="1"/></g>
<g fill="none" stroke="#f00">
<path d="M1012 160V145.5H1021V160" stroke-width="2"/>
<path d="M1012 160.5H1005.5L1016.5 170L1027.5 160.5H1021" stroke-width="1.3"/>
<path d="M1029.5 261V275.5H1038V261" stroke-width="2"/>
<path d="M1029.5 261H1023.5L1033.5 251.5L1043.5 261H1038" stroke-width="1.6"/>
</g>
<path d="M988 110H999L993.5 115.5Z" fill="#7a8a9c"/>
</g>
<g shape-rendering="crispEdges" fill="#000">
<rect x="1243" y="119" width="3" height="1"/>
<rect x="1243" y="152" width="3" height="1"/>
<rect x="1243" y="185" width="3" height="1"/>
<rect x="1243" y="218" width="3" height="1"/>
<rect x="1243" y="251" width="3" height="1"/>
<rect x="1243" y="284" width="3" height="1"/>
<rect x="1243" y="317" width="3" height="1"/>
<rect x="1243" y="350" width="3" height="1"/>
<rect x="1243" y="383" width="3" height="1"/>
<rect x="1243" y="416" width="3" height="1"/>
<rect x="1243" y="449" width="3" height="1"/>
<rect x="1243" y="482" width="3" height="1"/>
<rect x="1243" y="515" width="3" height="1"/>
<rect x="1243" y="548" width="3" height="1"/>
<rect x="1243" y="581" width="3" height="1"/>
<rect x="1243" y="614" width="3" height="1"/>
<rect x="1243" y="647" width="3" height="1"/>
<rect x="1243" y="680" width="3" height="1"/>
<rect x="9" y="684" width="1" height="4"/>
<rect x="73" y="684" width="1" height="4"/>
<rect x="137" y="684" width="1" height="4"/>
<rect x="201" y="684" width="1" height="4"/>
<rect x="265" y="684" width="1" height="4"/>
<rect x="329" y="684" width="1" height="4"/>
<rect x="393" y="684" width="1" height="4"/>
<rect x="457" y="684" width="1" height="4"/>
<rect x="521" y="684" width="1" height="4"/>
<rect x="585" y="684" width="1" height="4"/>
<rect x="649" y="684" width="1" height="4"/>
<rect x="713" y="684" width="1" height="4"/>
<rect x="777" y="684" width="1" height="4"/>
<rect x="841" y="684" width="1" height="4"/>
<rect x="905" y="684" width="1" height="4"/>
<rect x="969" y="684" width="1" height="4"/>
</g>
<path d="M12 116H20L16 120Z" fill="#000"/>
</svg>
<div class="abs" style="left:23px;top:112px;width:204px;height:11px;background:#fff"></div>
<span class="t" style="left:24.0px;top:111.5px;font-size:9px;line-height:13px;color:#000;transform:scaleX(1.055);-webkit-text-stroke:0.1px #000;">USDJPY,Daily</span>
<span class="t" style="left:91.0px;top:111.5px;font-size:9px;line-height:13px;color:#000;transform:scaleX(1.018);-webkit-text-stroke:0.1px #000;">100.022 100.305 99.938 100.062</span>
<span class="t" style="left:1248.5px;top:113.0px;font-size:9px;line-height:13px;color:#000;transform:scaleX(0.965);-webkit-text-stroke:0.1px #000;">100.755</span>
<span class="t" style="left:1248.5px;top:146.0px;font-size:9px;line-height:13px;color:#000;transform:scaleX(0.965);-webkit-text-stroke:0.1px #000;">100.500</span>
<span class="t" style="left:1248.5px;top:179.0px;font-size:9px;line-height:13px;color:#000;transform:scaleX(0.965);-webkit-text-stroke:0.1px #000;">100.250</span>
<span class="t" style="left:1248.5px;top:212.0px;font-size:9px;line-height:13px;color:#000;transform:scaleX(0.981);-webkit-text-stroke:0.1px #000;">99.995</span>
<span class="t" style="left:1248.5px;top:245.0px;font-size:9px;line-height:13px;color:#000;transform:scaleX(0.981);-webkit-text-stroke:0.1px #000;">99.745</span>
<span class="t" style="left:1248.5px;top:278.0px;font-size:9px;line-height:13px;color:#000;transform:scaleX(0.981);-webkit-text-stroke:0.1px #000;">99.495</span>
<span class="t" style="left:1248.5px;top:311.0px;font-size:9px;line-height:13px;color:#000;transform:scaleX(0.981);-webkit-text-stroke:0.1px #000;">99.240</span>
<span class="t" style="left:1248.5px;top:344.0px;font-size:9px;line-height:13px;color:#000;transform:scaleX(0.981);-webkit-text-stroke:0.1px #000;">98.990</span>
<span class="t" style="left:1248.5px;top:377.0px;font-size:9px;line-height:13px;color:#000;transform:scaleX(0.981);-webkit-text-stroke:0.1px #000;">98.735</span>
<span class="t" style="left:1248.5px;top:410.0px;font-size:9px;line-height:13px;color:#000;transform:scaleX(0.981);-webkit-text-stroke:0.1px #000;">98.485</span>
<span class="t" style="left:1248.5px;top:443.0px;font-size:9px;line-height:13px;color:#000;transform:scaleX(0.981);-webkit-text-stroke:0.1px #000;">98.235</span>
<span class="t" style="left:1248.5px;top:476.0px;font-size:9px;line-height:13px;color:#000;transform:scaleX(0.981);-webkit-text-stroke:0.1px #000;">97.980</span>
<span class="t" style="left:1248.5px;top:509.0px;font-size:9px;line-height:13px;color:#000;transform:scaleX(0.981);-webkit-text-stroke:0.1px #000;">97.730</span>
<span class="t" style="left:1248.5px;top:542.0px;font-size:9px;line-height:13px;color:#000;transform:scaleX(0.981);-webkit-text-stroke:0.1px #000;">97.475</span>
<span class="t" style="left:1248.5px;top:575.0px;font-size:9px;line-height:13px;color:#000;transform:scaleX(0.981);-webkit-text-stroke:0.1px #000;">97.225</span>
<span class="t" style="left:1248.5px;top:608.0px;font-size:9px;line-height:13px;color:#000;transform:scaleX(0.981);-webkit-text-stroke:0.1px #000;">96.970</span>
<span class="t" style="left:1248.5px;top:641.0px;font-size:9px;line-height:13px;color:#000;transform:scaleX(0.981);-webkit-text-stroke:0.1px #000;">96.720</span>
<span class="t" style="left:1248.5px;top:674.0px;font-size:9px;line-height:13px;color:#000;transform:scaleX(0.981);-webkit-text-stroke:0.1px #000;">96.470</span>
<div class="abs" style="left:1245px;top:156px;width:37px;height:11px;background:#0000c8"></div>
<span class="t" style="left:1249.0px;top:155.5px;font-size:9px;line-height:13px;color:#fff;transform:scaleX(0.965);-webkit-text-stroke:0.1px #fff;">100.423</span>
<div class="abs" style="left:1245px;top:204px;width:37px;height:11px;background:#000"></div>
<span class="t" style="left:1249.0px;top:203.5px;font-size:9px;line-height:13px;color:#fff;transform:scaleX(0.965);-webkit-text-stroke:0.1px #fff;">100.062</span>
<div class="abs" style="left:1245px;top:242px;width:34px;height:11px;background:#f00"></div>
<span class="t" style="left:1249.0px;top:241.5px;font-size:9px;line-height:13px;color:#fff;transform:scaleX(0.981);-webkit-text-stroke:0.1px #fff;">99.768</span>
<div class="abs" style="left:1227.5px;top:655px;width:13.5px;height:9px;background:#fff"></div>
<span class="t" style="left:1228.0px;top:653.5px;font-size:9px;line-height:13px;color:#f00;transform:scaleX(1.000);-webkit-text-stroke:0.1px #f00;-webkit-text-stroke:0.15px #f00;">0.0</span>
<div class="abs" style="left:1222.5px;top:582px;width:18.5px;height:9px;background:#fff"></div>
<span class="t" style="left:1223.0px;top:580.5px;font-size:9px;line-height:13px;color:#f00;transform:scaleX(1.000);-webkit-text-stroke:0.1px #f00;-webkit-text-stroke:0.15px #f00;">23.6</span>
<div class="abs" style="left:1222.5px;top:536px;width:18.5px;height:9px;background:#fff"></div>
<span class="t" style="left:1223.0px;top:534.5px;font-size:9px;line-height:13px;color:#f00;transform:scaleX(1.000);-webkit-text-stroke:0.1px #f00;-webkit-text-stroke:0.15px #f00;">38.2</span>
<div class="abs" style="left:1222.5px;top:499px;width:18.5px;height:9px;background:#fff"></div>
<span class="t" style="left:1223.0px;top:497.5px;font-size:9px;line-height:13px;color:#f00;transform:scaleX(1.000);-webkit-text-stroke:0.1px #f00;-webkit-text-stroke:0.15px #f00;">50.0</span>
<div class="abs" style="left:1222.5px;top:463px;width:18.5px;height:9px;background:#fff"></div>
<span class="t" style="left:1223.0px;top:461.5px;font-size:9px;line-height:13px;color:#f00;transform:scaleX(1.000);-webkit-text-stroke:0.1px #f00;-webkit-text-stroke:0.15px #f00;">61.8</span>
<div class="abs" style="left:1217.5px;top:343px;width:23.5px;height:9px;background:#fff"></div>
<span class="t" style="left:1218.0px;top:341.5px;font-size:9px;line-height:13px;color:#f00;transform:scaleX(1.000);-webkit-text-stroke:0.1px #f00;-webkit-text-stroke:0.15px #f00;">100.0</span>
<div class="abs" style="left:1217.5px;top:224px;width:23.5px;height:9px;background:#fff"></div>
<span class="t" style="left:1218.0px;top:222.5px;font-size:9px;line-height:13px;color:#f00;transform:scaleX(1.000);-webkit-text-stroke:0.1px #f00;-webkit-text-stroke:0.15px #f00;">138.2</span>
<div class="abs" style="left:1217.5px;top:187px;width:23.5px;height:9px;background:#fff"></div>
<span class="t" style="left:1218.0px;top:185.5px;font-size:9px;line-height:13px;color:#f00;transform:scaleX(1.000);-webkit-text-stroke:0.1px #f00;-webkit-text-stroke:0.15px #f00;">150.0</span>
<div class="abs" style="left:1217.5px;top:151px;width:23.5px;height:9px;background:#fff"></div>
<span class="t" style="left:1218.0px;top:149.5px;font-size:9px;line-height:13px;color:#f00;transform:scaleX(1.000);-webkit-text-stroke:0.1px #f00;-webkit-text-stroke:0.15px #f00;">161.8</span>
<span class="t" style="left:7.5px;top:686.1px;font-size:9px;line-height:13px;color:#000;transform:scaleX(1.030);-webkit-text-stroke:0.1px #000;">26 Aug 2013</span>
<span class="t" style="left:71.5px;top:686.1px;font-size:9px;line-height:13px;color:#000;transform:scaleX(1.030);-webkit-text-stroke:0.1px #000;">30 Aug 2013</span>
<span class="t" style="left:135.5px;top:686.1px;font-size:9px;line-height:13px;color:#000;transform:scaleX(1.030);-webkit-text-stroke:0.1px #000;">5 Sep 2013</span>
<span class="t" style="left:199.5px;top:686.1px;font-size:9px;line-height:13px;color:#000;transform:scaleX(1.030);-webkit-text-stroke:0.1px #000;">11 Sep 2013</span>
<span class="t" style="left:263.5px;top:686.1px;font-size:9px;line-height:13px;color:#000;transform:scaleX(1.030);-webkit-text-stroke:0.1px #000;">17 Sep 2013</span>
<span class="t" style="left:327.5px;top:686.1px;font-size:9px;line-height:13px;color:#000;transform:scaleX(1.030);-webkit-text-stroke:0.1px #000;">23 Sep 2013</span>
<span class="t" style="left:391.5px;top:686.1px;font-size:9px;line-height:13px;color:#000;transform:scaleX(1.030);-webkit-text-stroke:0.1px #000;">27 Sep 2013</span>
<span class="t" style="left:455.5px;top:686.1px;font-size:9px;line-height:13px;color:#000;transform:scaleX(1.030);-webkit-text-stroke:0.1px #000;">3 Oct 2013</span>
<span class="t" style="left:519.5px;top:686.1px;font-size:9px;line-height:13px;color:#000;transform:scaleX(1.030);-webkit-text-stroke:0.1px #000;">9 Oct 2013</span>
<span class="t" style="left:583.5px;top:686.1px;font-size:9px;line-height:13px;color:#000;transform:scaleX(1.030);-webkit-text-stroke:0.1px #000;">15 Oct 2013</span>
<span class="t" style="left:647.5px;top:686.1px;font-size:9px;line-height:13px;color:#000;transform:scaleX(1.030);-webkit-text-stroke:0.1px #000;">21 Oct 2013</span>
<span class="t" style="left:711.5px;top:686.1px;font-size:9px;line-height:13px;color:#000;transform:scaleX(1.030);-webkit-text-stroke:0.1px #000;">25 Oct 2013</span>
<span class="t" style="left:775.5px;top:686.1px;font-size:9px;line-height:13px;color:#000;transform:scaleX(1.030);-webkit-text-stroke:0.1px #000;">30 Oct 2013</span>
<span class="t" style="left:839.5px;top:686.1px;font-size:9px;line-height:13px;color:#000;transform:scaleX(1.030);-webkit-text-stroke:0.1px #000;">5 Nov 2013</span>
<span class="t" style="left:903.5px;top:686.1px;font-size:9px;line-height:13px;color:#000;transform:scaleX(1.030);-webkit-text-stroke:0.1px #000;">11 Nov 2013</span>
<span class="t" style="left:967.5px;top:686.1px;font-size:9px;line-height:13px;color:#000;transform:scaleX(1.030);-webkit-text-stroke:0.1px #000;">15 Nov 2013</span>
</body></html>
